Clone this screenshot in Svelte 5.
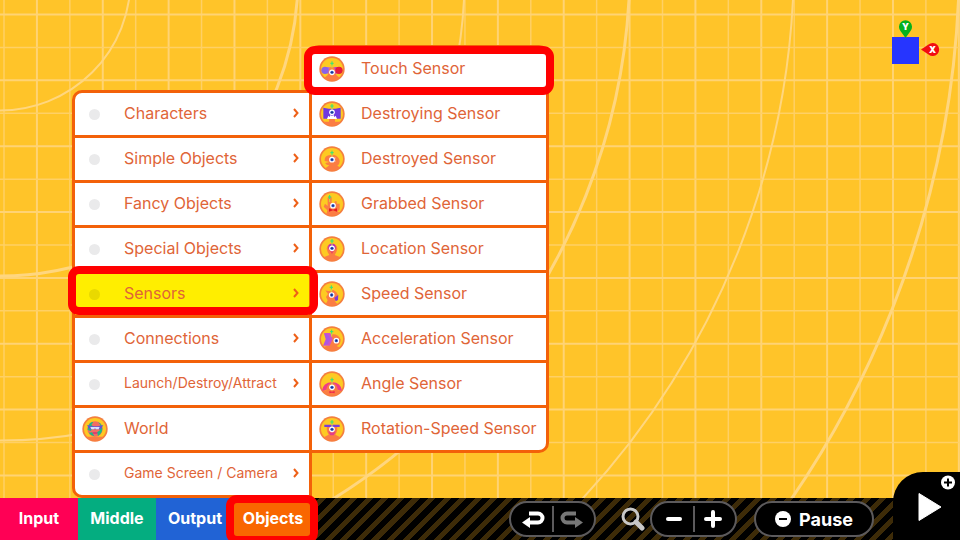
<script>
  const categories = [
    { label: 'Characters', more: true },
    { label: 'Simple Objects', more: true },
    { label: 'Fancy Objects', more: true },
    { label: 'Special Objects', more: true },
    { label: 'Sensors', more: true, active: true },
    { label: 'Connections', more: true },
    { label: 'Launch/Destroy/Attract', more: true, long: true },
    { label: 'World', icon: 'world' },
    { label: 'Game Screen / Camera', more: true, long: true },
  ];

  const sensors = [
    { label: 'Touch Sensor', icon: 'touch', active: true },
    { label: 'Destroying Sensor', icon: 'destroying' },
    { label: 'Destroyed Sensor', icon: 'destroyed' },
    { label: 'Grabbed Sensor', icon: 'grabbed' },
    { label: 'Location Sensor', icon: 'location' },
    { label: 'Speed Sensor', icon: 'speed' },
    { label: 'Acceleration Sensor', icon: 'acceleration' },
    { label: 'Angle Sensor', icon: 'angle' },
    { label: 'Rotation-Speed Sensor', icon: 'rotation' },
  ];

  const tabs = [
    { label: 'Input', tone: 'pink' },
    { label: 'Middle', tone: 'green' },
    { label: 'Output', tone: 'blue' },
    { label: 'Objects', tone: 'orange', active: true },
  ];

  // Each face is drawn in a 78-unit box: eye position and antenna position.
  const faces = {
    touch: { eye: [39, 49], antenna: [39, 22] },
    destroying: { eye: [39, 34], antenna: [39, 15] },
    destroyed: { eye: [39, 41], antenna: [39, 20] },
    grabbed: { eye: [42, 44], antenna: [32, 18] },
    location: { eye: [39, 37], antenna: [39, 15] },
    speed: { eye: [38, 42], antenna: [37, 19] },
    acceleration: { eye: [52, 44], antenna: [38, 17] },
    angle: { eye: [39, 49], antenna: [39, 26] },
    rotation: { eye: [39, 40], antenna: [39, 18] },
  };

  const step = 65.85;
  const columns = Array.from({ length: 60 }, (_, i) => ({ at: 4 + (i * step) / 2, major: i % 2 === 1 }));
  const rows = Array.from({ length: 40 }, (_, i) => ({ at: 14.5 + (i * step) / 2, major: i % 2 === 0 }));
  const arcs = [
    { cy: -20, r: 130.5, w: 2 },
    { cy: -22, r: 298, w: 3 },
    { cy: -24, r: 464.6, w: 2 },
    { cy: -36, r: 630, w: 3 },
    { cy: -41, r: 794, w: 2 },
    { cy: -44, r: 959.5, w: 3 },
  ];
</script>

{#snippet badge(name)}
  <svg class="badge" viewBox="0 0 78 78" aria-hidden="true">
    <defs>
      <clipPath id="clip-{name}"><circle cx="39" cy="39" r="35" /></clipPath>
    </defs>
    <circle cx="39" cy="39" r="38" fill="#f47f3f" />
    <circle cx="39" cy="39" r="33" fill="#fdca22" />
    <g clip-path="url(#clip-{name})">
      {#if name === 'touch'}
        <path d="M12 66Q28 60 30 48H48Q50 60 66 66L60 78H18Z" fill="#fb7d43" />
        <circle cx="27" cy="43" r="10" fill="#c56bc4" />
        <circle cx="18" cy="43" r="11" fill="#8b62e8" />
        <circle cx="51" cy="43" r="10" fill="#b93bd0" />
        <circle cx="60" cy="43" r="11" fill="#e61a3c" />
        <path d="M29 48Q30 32 39 32Q48 32 49 48V62H29Z" fill="#fb7d43" />
      {:else if name === 'destroying'}
        <path d="M5 62H73V78H5Z" fill="#fb7d43" />
        <path d="M30 52H48V66H30Z" fill="#fb7d43" />
        <path d="M13 20L29 23H49L65 20V53H13Z" fill="#7038e0" />
        <path d="M24 54L28 44L32 48L35 41L39 46L43 41L46 48L50 44L54 54Z" fill="#fff" />
      {:else if name === 'destroyed'}
        <path d="M17 45Q16 30 30 28Q50 22 60 38Q66 51 55 59L72 70L54 78L12 72L31 58Q20 56 19 51L32 48Z" fill="#fb7d43" />
        <path d="M39 41L50 35M39 41L50 46" stroke="#f4a28c" stroke-width="4" />
      {:else if name === 'grabbed'}
        <path d="M26 20Q32 12 38 20V38H47V31H53V38H62V55L56 62L72 68L56 78H20L25 58L14 47L18 38L26 45Z" fill="#fb7d43" />
        <path d="M30 52L42 56L54 52V62L42 58L30 62Z" fill="#e51a24" />
      {:else if name === 'location'}
        <path d="M23 38A16 16 0 0 1 55 38Q53 49 47 57L70 66V78H8V66L31 57Q25 49 23 38Z" fill="#fb7d43" />
        <circle cx="39" cy="34" r="11" fill="#b12bc2" />
        <path d="M28 35L39 54L50 35Z" fill="#ed4360" />
      {:else if name === 'speed'}
        <path d="M19 28Q30 32 43 27Q53 31 57 42Q55 53 47 60L62 78H16L26 58L21 48L27 39Z" fill="#fb7d43" />
        <path d="M46 50L58 42L57 57L50 61Z" fill="#8338d4" />
      {:else if name === 'acceleration'}
        <path d="M31 28Q53 18 65 40Q66 54 53 60L70 69L55 78H7V65L32 57Z" fill="#fb7d43" />
        <path d="M15 21H34L41 40L32 59H12L20 40Z" fill="#ce51c8" />
        <path d="M16 24L28 27L34 40L26 54L15 57L22 40Z" fill="#aa57e4" />
      {:else if name === 'angle'}
        <path d="M2 58H76V78H2Z" fill="#fb7d43" />
        <path d="M9 60Q12 34 39 34Q66 34 69 60Q39 48 9 60Z" fill="#ee3c89" />
        <path d="M22 60Q23 37 39 37Q55 37 56 60Z" fill="#fb7d43" />
        <path d="M31 60L39 62L47 60V67L39 65L31 67Z" fill="#ed294c" />
      {:else if name === 'rotation'}
        <path d="M25 28H53Q58 44 49 56L61 62V70H17V62L29 56Q20 44 25 28Z" fill="#fb7d43" />
        <path d="M8 65H70V78H8Z" fill="#fb7d43" />
        <path d="M27 45Q39 54 51 45L44 58H34Z" fill="#e43c8c" />
        <path d="M16 26H62V33H16Z" fill="#7a3ddb" />
      {:else if name === 'world'}
        <path d="M13 62H65V78H13Z" fill="#fb7d43" />
        <circle cx="39" cy="39" r="23" fill="#f36d61" />
        <path d="M18 31Q24 17 34 18L28 27L36 32L26 45L17 42ZM48 19Q60 22 61 38Q61 51 48 60L45 49L54 43L48 33L56 27Z" fill="#20b884" />
        <path d="M20 50Q27 59 37 61L31 49Z" fill="#20b884" />
        <path d="M15 27L28 31H51L64 27L56 40H23Z" fill="#6b4dd8" />
        <path d="M25 33H53L50 40H42L39 37L36 40H28Z" fill="#d5e4ff" />
        <path d="M32 49H46V53H32Z" fill="#d73378" />
      {/if}
      {#if faces[name]}
        <g transform="translate({faces[name].antenna[0]} {faces[name].antenna[1]})">
          <path d="M0 2V15" stroke="#cddb3d" stroke-width="3" />
          <path d="M0 -6V6M-5 0H5" stroke="#2ee67b" stroke-width="3" />
        </g>
        <g transform="translate({faces[name].eye[0]} {faces[name].eye[1]})">
          <circle r="8.5" fill="#fff" />
          <circle r="5" fill="#3057c9" />
          <circle r="2" fill="#111d50" />
        </g>
      {/if}
    </g>
  </svg>
{/snippet}

{#snippet row(item)}
  <li>
    <button class="row" class:active={item.active} class:picked={item.active && item.more}>
      {#if item.icon}
        {@render badge(item.icon)}
      {:else}
        <span class="dot"></span>
      {/if}
      <span class="label" class:long={item.long}>{item.label}</span>
      {#if item.more}
        <svg class="chevron" viewBox="0 0 6 10" aria-hidden="true"><path d="M1 1L4.5 5L1 9" /></svg>
      {/if}
    </button>
  </li>
{/snippet}

<div class="app">
  <main class="canvas">
    <svg class="grid" aria-hidden="true">
      {#each columns as c}
        <line x1={c.at} x2={c.at} y1="0" y2="100%" class:major={c.major} />
      {/each}
      {#each rows as r}
        <line x1="0" x2="100%" y1={r.at} y2={r.at} class:major={r.major} />
      {/each}
      {#each arcs as a}
        <circle cx="0" cy={a.cy} r={a.r} stroke-width={a.w} />
      {/each}
    </svg>

    <svg class="gizmo" width="52" height="48" viewBox="0 0 52 48" role="img" aria-label="View axes">
      <rect x="4" y="19" width="27" height="27" fill="#2635ff" />
      <path d="M17.5 20L12.5 13A6.5 6.5 0 1 1 22.5 13Z" fill="#06b11c" />
      <path d="M33 31.5L40.5 26.5A6.5 6.5 0 1 1 40.5 36.5Z" fill="#f20d12" />
      <text x="17.5" y="12">Y</text>
      <text x="44.5" y="35">X</text>
    </svg>

    <nav class="menu" aria-label="Objects">
      <ul class="panel main-panel">
        {#each categories as item}{@render row(item)}{/each}
      </ul>
      <ul class="panel sub-panel">
        {#each sensors as item}{@render row(item)}{/each}
      </ul>
    </nav>
  </main>

  <footer class="toolbar">
    <div class="tabs">
      {#each tabs as tab}
        <button class="tab {tab.tone}" class:active={tab.active}>{tab.label}</button>
      {/each}
    </div>

    <div class="tools">
      <div class="pill">
        <button aria-label="Undo">
          <svg width="24" height="18" viewBox="0 0 24 18"><path class="stroke" d="M8 3.5H17A4.2 4.2 0 0 1 17 12.5H7" /><path class="solid" d="M1 12.5L9 7V18Z" /></svg>
        </button>
        <span class="divider"></span>
        <button class="off" aria-label="Redo">
          <svg width="24" height="18" viewBox="0 0 24 18"><path class="stroke" d="M16 3.5H7A4.2 4.2 0 0 0 7 12.5H17" /><path class="solid" d="M23 12.5L15 7V18Z" /></svg>
        </button>
      </div>
      <svg class="lens" width="24" height="24" viewBox="0 0 24 24" aria-hidden="true">
        <circle cx="9.5" cy="9.5" r="7.5" />
        <path d="M15 15L21 21" />
      </svg>
      <div class="pill">
        <button aria-label="Zoom out">
          <svg width="18" height="18" viewBox="0 0 18 18"><path class="stroke round" d="M3 9H15" /></svg>
        </button>
        <span class="divider"></span>
        <button aria-label="Zoom in">
          <svg width="18" height="18" viewBox="0 0 18 18"><path class="stroke round" d="M2 9H16M9 2V16" /></svg>
        </button>
      </div>
      <button class="pause">
        <svg width="16" height="16" viewBox="0 0 16 16" aria-hidden="true"><circle cx="8" cy="8" r="8" fill="#fff" /><path d="M4 8H12" stroke="#000" stroke-width="2" /></svg>
        Pause
      </button>
      <button class="play" aria-label="Play">
        <svg width="67" height="68" viewBox="0 0 67 68">
          <path d="M26 21.5L48 35L26 48.5Z" fill="#fff" stroke="#fff" stroke-linejoin="round" />
          <circle cx="55" cy="10.5" r="7" fill="#fff" />
          <path d="M51 10.5H59M55 6.5V14.5" stroke="#000" stroke-width="2" />
        </svg>
      </button>
    </div>
  </footer>
</div>

<style>
  :global(body) {
    margin: 0;
  }

  .app {
    display: flex;
    flex-direction: column;
    height: 100vh;
    overflow: hidden;
    font-family: Inter, 'Liberation Sans', sans-serif;
  }

  button {
    margin: 0;
    padding: 0;
    border: 0;
    background: none;
    color: inherit;
    font: inherit;
    cursor: pointer;
  }

  .canvas {
    position: relative;
    flex: 1;
    min-height: 0;
    background: #ffc429;
  }

  .grid {
    display: block;
    width: 100%;
    height: 100%;
  }

  .grid line {
    stroke: #ffd065;
    stroke-width: 1.5;
  }

  .grid line.major {
    stroke: #ffd374;
    stroke-width: 2;
  }

  .grid circle {
    fill: none;
    stroke: #ffd67f;
  }

  .gizmo {
    position: absolute;
    top: 18px;
    right: 20px;
  }

  .gizmo text {
    fill: #fff;
    font-size: 9px;
    font-weight: 900;
    text-anchor: middle;
  }

  .menu {
    position: absolute;
    left: 72px;
    bottom: 0;
    display: flex;
    align-items: flex-end;
  }

  .panel {
    box-sizing: border-box;
    width: 240px;
    margin: 0;
    padding: 0;
    list-style: none;
    border: 3px solid #f36109;
    background: #fff;
  }

  .main-panel {
    border-radius: 10px 0 0 10px;
  }

  .sub-panel {
    margin: 0 0 45px -3px;
    border-radius: 10px 10px 10px 0;
  }

  .panel li + li {
    border-top: 3px solid #f36109;
  }

  .row {
    position: relative;
    display: flex;
    align-items: center;
    gap: 16px;
    width: 100%;
    height: 42px;
    padding: 0 10px 0 7px;
    color: #df6538;
    font-size: 16px;
    line-height: 20px;
    text-align: left;
    white-space: nowrap;
  }

  .picked {
    background: #ffee00;
  }

  .row.active::after {
    content: '';
    position: absolute;
    z-index: 1;
    inset: -2px -8px -5px;
    border: 8px solid #f00;
    border-radius: 11px;
  }

  .row.picked::after {
    inset: -7px -9px 0 -7px;
  }

  .label {
    flex: 1;
    padding-bottom: 2px;
  }

  .label.long {
    font-size: 14px;
  }

  .badge {
    flex: none;
    width: 26px;
    height: 26px;
  }

  .dot {
    flex: none;
    width: 11px;
    height: 11px;
    margin: 0 8px 0 7px;
    border-radius: 50%;
    background: #eaeaeb;
  }

  .picked .dot {
    background: #e9d900;
  }

  .chevron {
    flex: none;
    width: 6px;
    height: 10px;
    margin: 0 0 2px -8px;
    fill: none;
    stroke: #ee6018;
    stroke-width: 2;
  }

  .toolbar {
    display: flex;
    justify-content: space-between;
    height: 42px;
    background: repeating-linear-gradient(135deg, #000 0 6px, #3d2b08 6px 11px);
  }

  .tabs {
    display: flex;
  }

  .tab {
    position: relative;
    width: 78px;
    padding-bottom: 2px;
    color: #fff;
    font-size: 16px;
    font-weight: 700;
  }

  .pink {
    background: #ff0055;
  }

  .green {
    background: #04ad80;
  }

  .blue {
    background: #2163d5;
  }

  .orange {
    background: #f96600;
  }

  .tab.active::after {
    content: '';
    position: absolute;
    inset: -3px -6px -4px -8px;
    border: 8px solid #f00;
    border-radius: 11px;
  }

  .tools {
    display: flex;
    align-items: center;
    color: #fff;
  }

  .pill,
  .pause {
    box-sizing: border-box;
    display: flex;
    align-items: center;
    height: 36px;
    border: 2px solid #5c5a5c;
    border-radius: 18px;
    background: #000;
  }

  .pill {
    width: 87px;
    padding: 0 3px;
  }

  .pill button {
    display: flex;
    flex: 1;
    align-items: center;
    justify-content: center;
    height: 100%;
  }

  .pill .off {
    color: #777;
  }

  .stroke {
    fill: none;
    stroke: currentColor;
    stroke-width: 4;
  }

  .round {
    stroke-linecap: round;
  }

  .solid {
    fill: currentColor;
  }

  .divider {
    width: 2px;
    height: 26px;
    background: #5c5a5c;
  }

  .lens {
    margin: 0 5px 0 25px;
    fill: none;
    stroke: #c8c8c8;
    stroke-width: 3;
  }

  .lens path {
    stroke-width: 5;
    stroke-linecap: round;
  }

  .pause {
    justify-content: center;
    gap: 8px;
    width: 120px;
    margin: 0 19px 0 17px;
    color: #fff;
    font-size: 18px;
    font-weight: 700;
  }

  .play {
    align-self: flex-end;
    position: relative;
    width: 67px;
    height: 68px;
    border-radius: 30px 0 0 0;
    background: #000;
  }

  .play svg {
    display: block;
  }
</style>
